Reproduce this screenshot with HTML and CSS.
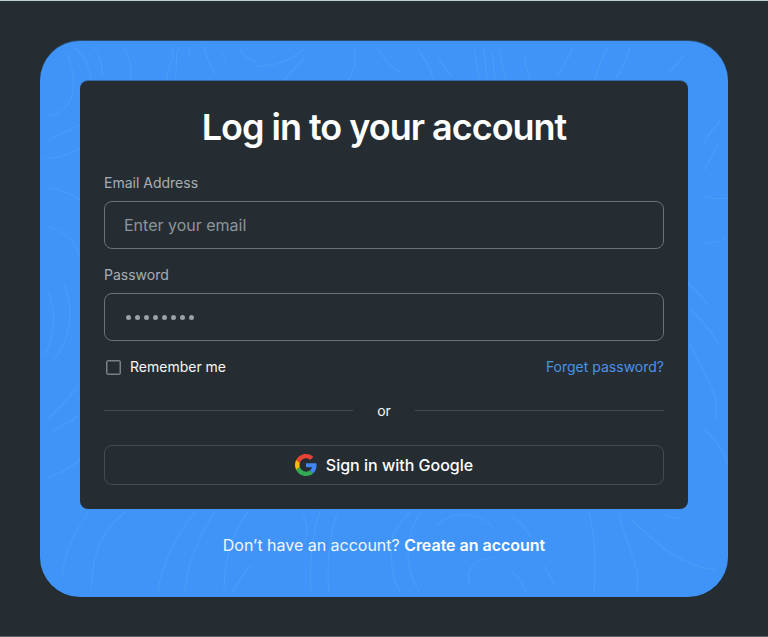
FILE: index.html
```html
<!DOCTYPE html>
<html lang="en">
<head>
<meta charset="utf-8">
<title>Log in</title>
<link rel="stylesheet" href="styles.css">
</head>
<body>
<main class="page">
  <section class="panel">
    <svg class="contours" viewBox="40 41 688 556" aria-hidden="true">
      <path d="M66 53C74 68 77 90 68 104Q61 115 47 116M74 48C85 55 89 66 91 79M94 47C101 56 103 66 102 77M125 49C130 59 132 69 131 80M172 48C176 59 166 67 167 80M179 47C174 58 178 68 175 80M189 47V56M204 47Q207 60 216 74M221 50L225 60M240 49Q245 58 255 62M256 66Q275 66 286 60Q299 55 305 48M284 80L304 58M355 48V62Q354 73 348 80M376 48C384 55 386 65 400 72M418 50Q428 62 434 80M438 57Q445 70 453 76M474 50Q477 66 479 80M484 49L487 80M492 51L495 80M499 48Q502 66 506 80M524 56Q526 68 530 80M572 48Q567 63 557 75M607 48Q599 64 595 80M630 48Q625 65 616 78M684 56L669 72"/>
      <path d="M46 141Q59 135 80 125M43 158Q61 160 80 148M48 188Q67 190 80 200M48 227C67 232 76 242 79 256M48 291C56 309 56 333 45 355M64 284C75 309 70 340 54 360M47 419C64 407 66 398 78 387M49 433Q67 424 79 415M47 478Q64 473 80 460"/>
      <path d="M720 121Q710 131 704 144M704 170L718 145M704 196Q713 200 728 198M702 243Q718 243 726 238M688 283Q700 295 708 304M690 308Q705 323 719 344M690 344Q704 370 716 398V420M703 428Q722 446 727 462"/>
      <path d="M89 512Q66 542 62 576M125 512C104 528 92 550 91 590M195 512Q163 552 158 592M215 512C196 540 187 565 185 592M248 512Q225 540 224 590M250 566Q240 577 233 592M302 513Q311 530 303 545M320 510Q308 550 311 592M337 513Q325 552 329 592M410 512Q391 530 391 548Q391 577 400 592M421 512C401 542 407 570 419 592M436 525C459 507 480 515 493 527M470 586C464 567 476 560 493 557M511 516Q524 523 530 537M512 572Q523 580 526 592M543 564Q549 576 555 585M589 512Q598 550 594 592M619 512C622 540 642 562 637 592M631 519C659 546 682 567 716 570M663 514Q670 518 682 518"/>
    </svg>
    <form class="card">
      <h1 class="title">Log in to your account</h1>
      <label class="label" for="email">Email Address</label>
      <input class="field" id="email" type="email" placeholder="Enter your email">
      <label class="label label-password" for="password">Password</label>
      <div class="field dots" id="password"><i></i><i></i><i></i><i></i><i></i><i></i><i></i><i></i></div>
      <div class="options">
        <label class="remember"><span class="checkbox"></span><span class="remember-text">Remember me</span></label>
        <a class="forgot">Forget password?</a>
      </div>
      <div class="divider"><span class="or">or</span></div>
      <button class="google" type="button">
        <svg class="google-logo" viewBox="0 0 48 48" aria-hidden="true">
          <path fill="#ea4335" d="M24 9.5c3.54 0 6.71 1.22 9.21 3.6l6.85-6.85C35.9 2.38 30.47 0 24 0 14.62 0 6.51 5.38 2.56 13.22l7.98 6.19C12.43 13.72 17.74 9.5 24 9.5z"/>
          <path fill="#4285f4" d="M46.98 24.55c0-1.57-.15-3.09-.38-4.55H24v9.02h12.94c-.58 2.96-2.26 5.48-4.78 7.18l7.73 6c4.51-4.18 7.09-10.36 7.09-17.65z"/>
          <path fill="#fbbc05" d="M10.53 28.59c-.48-1.45-.76-2.99-.76-4.59s.27-3.14.76-4.59l-7.98-6.19C.92 16.46 0 20.12 0 24c0 3.88.92 7.54 2.56 10.78l7.97-6.19z"/>
          <path fill="#34a853" d="M24 48c6.48 0 11.93-2.13 15.89-5.81l-7.73-6c-2.15 1.45-4.92 2.3-8.16 2.3-6.26 0-11.57-4.22-13.47-9.91l-7.98 6.19C6.51 42.62 14.62 48 24 48z"/>
        </svg>
        <span class="google-text">Sign in with Google</span>
      </button>
    </form>
    <p class="signup"><span class="signup-text">Don’t have an account?</span> <a class="create">Create an account</a></p>
  </section>
</main>
</body>
</html>
```

FILE: styles.css
```css
* { box-sizing: border-box; }
body {
  margin: 0;
  background: #252d32;
  font-family: Inter, "Liberation Sans", sans-serif;
}
.page {
  height: 637px;
  padding: 40px;
  padding-bottom: 39px;
  border-top: 1px solid #bfced3;
  border-bottom: 1px solid #5d6467;
}
.panel {
  position: relative;
  height: 556px;
  padding: 40px;
  border-radius: 40px;
  overflow: hidden;
  background: #4094f7;
  box-shadow: 0 -1px 0 rgba(64, 148, 247, .3);
}
.contours {
  position: absolute;
  inset: 0;
  width: 688px;
  height: 556px;
  fill: none;
  stroke: #62aafa;
  stroke-opacity: .34;
  stroke-width: 1.2;
}
.card {
  position: relative;
  height: 428px;
  padding: 24px;
  border-radius: 8px;
  background: #252d32;
  box-shadow: 0 -1px 0 rgba(37, 45, 50, .4);
}
.title {
  margin: 0;
  height: 44px;
  font-size: 36px;
  line-height: 44px;
  font-weight: 600;
  letter-spacing: -1.01px;
  text-align: center;
  color: #fff;
}
.label {
  display: block;
  margin-top: 24px;
  height: 20px;
  font-size: 14px;
  line-height: 20px;
  color: #a9adb3;
}
.label-password { margin-top: 16px; }
.field {
  display: flex;
  align-items: center;
  width: 100%;
  height: 48px;
  margin-top: 8px;
  padding: 0 19px;
  border: 1px solid #6b7177;
  border-radius: 8px;
  background: transparent;
  font: 400 16px/24px Inter, sans-serif;
  letter-spacing: 0;
}
.field::placeholder { color: #8f949a; opacity: 1; }
.dots { gap: 4px; padding: 1px 21px 0; }
.dots i { width: 5px; height: 5px; border-radius: 50%; background: #9ca1a8; }
.options {
  display: flex;
  justify-content: space-between;
  align-items: center;
  height: 20px;
  margin-top: 16px;
  font-size: 14px;
  line-height: 20px;
}
.remember { display: flex; align-items: center; gap: 9px; padding-left: 2px; color: #f5f6f7; }
.checkbox { width: 15px; height: 15px; border: 1px solid #7b8187; border-radius: 2px; box-shadow: inset 0 0 0 .5px #7b8187; }
.forgot { color: #4b93e6; }
.divider {
  display: flex;
  align-items: center;
  gap: 24px;
  height: 20px;
  margin-top: 24px;
  font-size: 14px;
  line-height: 20px;
  color: #f5f6f7;
}
.divider::before, .divider::after { content: ""; flex: 1; height: 1px; margin-bottom: 1px; background: #434b53; }
.google {
  display: flex;
  align-items: center;
  justify-content: center;
  gap: 9px;
  width: 100%;
  height: 40px;
  margin-top: 24px;
  padding: 0;
  border: 1px solid #434b50;
  border-radius: 8px;
  background: transparent;
  font: 500 16px/24px Inter, sans-serif;
  color: #fff;
}
.google-logo { width: 22px; height: 22px; }
.signup {
  position: relative;
  margin: 24px 0 0;
  font-size: 16px;
  line-height: 24px;
  letter-spacing: -.02px;
  text-align: center;
  color: #f0f7ff;
}
.create { font-weight: 600; color: #fff; }
```
